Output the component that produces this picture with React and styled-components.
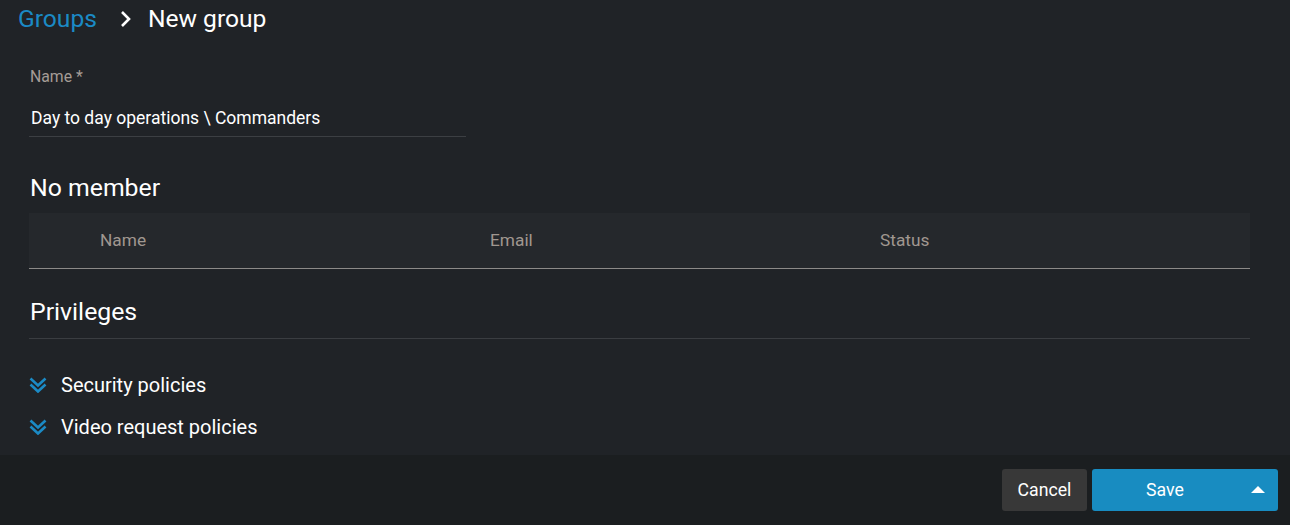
import React from 'react'
import styled, { createGlobalStyle } from 'styled-components'

const GlobalStyle = createGlobalStyle`
    html, body {
        margin: 0;
        padding: 0;
        background: #202327;
        font-family: Roboto, "Liberation Sans", sans-serif;
    }
`

const Page = styled.div`
    display: flex;
    flex-direction: column;
    height: 525px;
    overflow: hidden;
`

const Content = styled.div`
    flex: 1;
    display: flex;
    flex-direction: column;
    padding: 0 40px 0 29px;
`

const Breadcrumb = styled.div`
    display: flex;
    align-items: center;
    height: 37px;
    margin-left: -11px;
    font-size: 24.6px;
`

const CrumbLink = styled.span`
    color: #1b8ac5;
`

const CrumbSep = styled.span`
    display: flex;
    margin: 0 15px 0 22px;
`

const CrumbCurrent = styled.span`
    color: #ffffff;
`

const Field = styled.div`
    display: flex;
    flex-direction: column;
    width: 437px;
    margin-top: 30px;
`

const Label = styled.label`
    font-size: 15.8px;
    color: #a59c96;
    margin-left: 1px;
`

const Input = styled.div`
    font-size: 17.5px;
    color: #ffffff;
    padding: 22px 0 8px 2px;
    border-bottom: 1px solid #3c3f43;
`

const SectionTitle = styled.h2`
    margin: 0;
    font-size: 24.8px;
    font-weight: 400;
    color: #ffffff;
    margin-left: 1px;
    height: 28px;
    line-height: 28px;
`

const MembersTitle = styled(SectionTitle)`
    margin-top: 37px;
`

const TableHead = styled.div`
    display: grid;
    grid-template-columns: 390px 390px 1fr;
    align-items: center;
    height: 55px;
    margin-top: 11px;
    padding-left: 71px;
    background: #25282c;
    border-bottom: 1px solid #8c8a88;
`

const HeadCell = styled.span`
    font-size: 17.3px;
    color: #a09790;
    margin-top: -1px;
`

const PrivTitle = styled(SectionTitle)`
    margin-top: 29px;
    padding-bottom: 12px;
    border-bottom: 1px solid #3a3d41;
    margin-left: 0;
    padding-left: 1px;
`

const PolicyList = styled.div`
    display: flex;
    flex-direction: column;
    gap: 18px;
    margin-top: 34px;
`

const Policy = styled.div`
    display: flex;
    align-items: center;
    gap: 14px;
    height: 24px;
    font-size: 20px;
    color: #ffffff;
`

const Footer = styled.div`
    display: flex;
    justify-content: flex-end;
    align-items: center;
    gap: 5px;
    height: 70px;
    padding-right: 12px;
    background: #1b1e20;
`

const Button = styled.button`
    display: flex;
    align-items: center;
    height: 42px;
    border: none;
    border-radius: 3px;
    font-family: inherit;
    font-size: 17.7px;
    color: #ffffff;
    background: ${p => (p.primary ? '#188cc1' : '#383838')};
    width: ${p => p.width}px;
    padding: 0;
`

const ButtonLabel = styled.span`
    flex: 1;
    text-align: center;
`

const CaretPart = styled.span`
    display: flex;
    justify-content: center;
    align-items: center;
    width: 40px;
    height: 100%;
`

const Caret = styled.span`
    width: 0;
    height: 0;
    margin-bottom: 1px;
    border-left: 7px solid transparent;
    border-right: 7px solid transparent;
    border-bottom: 7px solid #ffffff;
`

const ChevronRight = () => (
    <svg width="14" height="18" viewBox="0 0 14 18">
        <path d="M3 2 L10 9 L3 16" stroke="#fff" strokeWidth="2.6" fill="none" />
    </svg>
)

const ChevronsDown = () => (
    <svg width="18" height="16" viewBox="0 0 18 16">
        <path d="M1.5 1.5 L9 8.5 L16.5 1.5" stroke="#1b8ac5" strokeWidth="2.6" fill="none" />
        <path d="M1.5 7.5 L9 14.5 L16.5 7.5" stroke="#1b8ac5" strokeWidth="2.6" fill="none" />
    </svg>
)

export default function App() {
    const policies = ['Security policies', 'Video request policies']
    return (
        <Page>
            <GlobalStyle />
            <Content>
                <Breadcrumb>
                    <CrumbLink>Groups</CrumbLink>
                    <CrumbSep><ChevronRight /></CrumbSep>
                    <CrumbCurrent>New group</CrumbCurrent>
                </Breadcrumb>
                <Field>
                    <Label>Name *</Label>
                    <Input>Day to day operations \ Commanders</Input>
                </Field>
                <MembersTitle>No member</MembersTitle>
                <TableHead>
                    <HeadCell>Name</HeadCell>
                    <HeadCell>Email</HeadCell>
                    <HeadCell>Status</HeadCell>
                </TableHead>
                <PrivTitle>Privileges</PrivTitle>
                <PolicyList>
                    {policies.map(p => (
                        <Policy key={p}>
                            <ChevronsDown />
                            {p}
                        </Policy>
                    ))}
                </PolicyList>
            </Content>
            <Footer>
                <Button width={85}><ButtonLabel>Cancel</ButtonLabel></Button>
                <Button primary width={186}>
                    <ButtonLabel>Save</ButtonLabel>
                    <CaretPart><Caret /></CaretPart>
                </Button>
            </Footer>
        </Page>
    )
}
